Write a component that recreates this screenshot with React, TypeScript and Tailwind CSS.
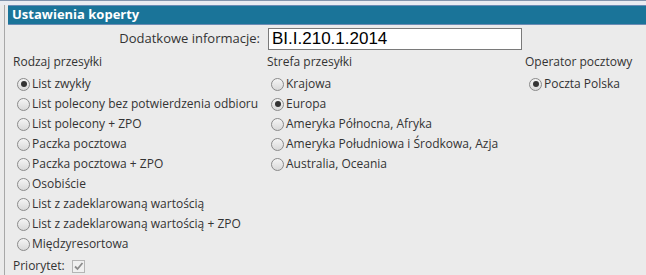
const rodzaj = [
  "List zwykły",
  "List polecony bez potwierdzenia odbioru",
  "List polecony + ZPO",
  "Paczka pocztowa",
  "Paczka pocztowa + ZPO",
  "Osobiście",
  "List z zadeklarowaną wartością",
  "List z zadeklarowaną wartością + ZPO",
  "Międzyresortowa",
];

const strefa = [
  "Krajowa",
  "Europa",
  "Ameryka Północna, Afryka",
  "Ameryka Południowa i Środkowa, Azja",
  "Australia, Oceania",
];

function Radio({ label, checked }: { label: string; checked?: boolean }) {
  return (
    <div className="flex h-[20px] items-center gap-[2px]">
      <span className="flex h-[13px] w-[13px] items-center justify-center rounded-full border border-[#8a8a8a] bg-gradient-to-b from-[#f4f4f4] to-[#d9d9d9]">
        {checked && <span className="h-[6px] w-[6px] rounded-full bg-[#333]" />}
      </span>
      <span>{label}</span>
    </div>
  );
}

export default function App() {
  return (
    <div
      className="h-[275px] w-[646px] overflow-hidden border-t border-[#8395ad] bg-[#ebebeb] text-[12px] text-[#333]"
      style={{ fontFamily: "'Open Sans', sans-serif" }}
    >
      <div className="h-[4px] bg-[#e9ecf1]" />
      <div className="ml-[4px] h-full border-l border-[#a8a8a8] pl-[3px]">
        {/* Header */}
        <div className="flex h-[20px] items-center border-y border-[#6a8bb4] bg-[#1a7499] px-[4px] text-[13px] font-bold text-white">
          Ustawienia koperty
        </div>

        {/* Dodatkowe informacje */}
        <div className="mt-[3px] flex items-center">
          <span className="w-[252px] text-right text-[13px]">Dodatkowe informacje:</span>
          <div
            className="ml-[8px] flex h-[22px] w-[254px] items-center border border-[#7a7a7a] bg-white px-[3px] text-[17px] text-black"
            style={{ fontFamily: "'Liberation Sans', sans-serif" }}
          >
            BI.I.210.1.2014
          </div>
        </div>

        {/* Columns */}
        <div className="mt-[2px] flex">
          <div className="w-[259px] pl-[5px]">
            <div className="h-[20px] leading-[20px]">Rodzaj przesyłki</div>
            <div className="mt-[2px] pl-[4px]">
              {rodzaj.map((r, i) => (
                <Radio key={r} label={r} checked={i === 0} />
              ))}
            </div>
          </div>
          <div className="w-[258px]">
            <div className="h-[20px] leading-[20px]">Strefa przesyłki</div>
            <div className="mt-[2px] pl-[4px]">
              {strefa.map((s, i) => (
                <Radio key={s} label={s} checked={i === 1} />
              ))}
            </div>
          </div>
          <div>
            <div className="h-[20px] leading-[20px]">Operator pocztowy</div>
            <div className="mt-[2px] pl-[4px]">
              <Radio label="Poczta Polska" checked />
            </div>
          </div>
        </div>

        {/* Priorytet */}
        <div className="mt-[3px] flex items-center gap-[7px] pl-[5px]">
          <span>Priorytet:</span>
          <span className="flex h-[13px] w-[13px] items-center justify-center border border-[#b5b5b5] bg-[#f0f0f0]">
            <svg width="11" height="11" viewBox="0 0 11 11">
              <path d="M2 5.5 L4.5 8 L9.5 2" fill="none" stroke="#8c8c8c" strokeWidth="1.8" />
            </svg>
          </span>
        </div>
      </div>
    </div>
  );
}
